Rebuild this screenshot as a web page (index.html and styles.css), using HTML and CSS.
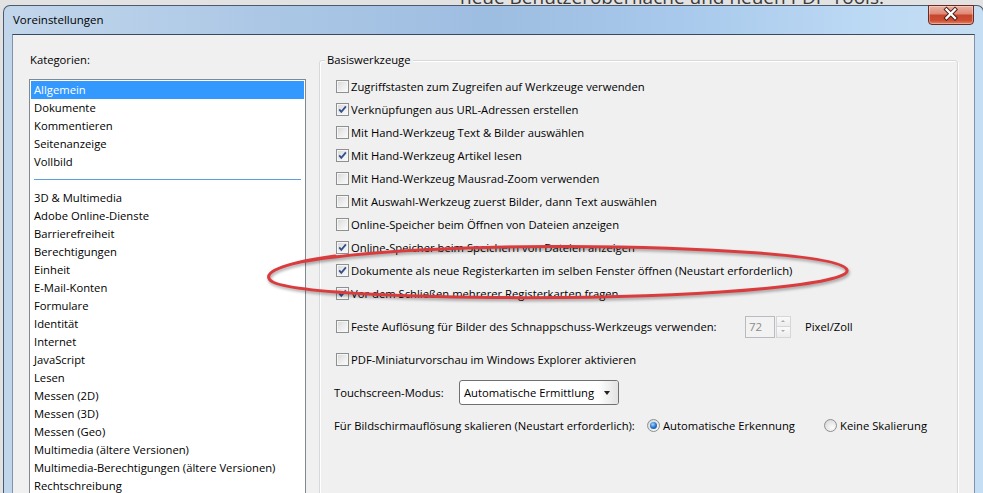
FILE: index.html
```html
<!DOCTYPE html>
<html lang="de">
<head>
    <meta charset="UTF-8" />
    <title>Voreinstellungen</title>
    <link rel="stylesheet" href="styles.css">
</head>
<body>

<!-- page behind the dialog, only its last line peeks out -->
<div class="backdrop"><span>neue Benutzeroberfläche und neuen PDF-Tools.</span></div>

<div class="window">
    <div class="titlebar">
        <span class="title">Voreinstellungen</span>
        <button class="close" aria-label="Schließen">
            <svg width="46" height="19" viewBox="0 0 46 19">
                <path d="M18.5 4.5l8.5 8.5M27 4.5l-8.5 8.5" stroke="#4b1a12" stroke-width="4.2" stroke-linecap="square" fill="none"/>
                <path d="M18.5 4.5l8.5 8.5M27 4.5l-8.5 8.5" stroke="#fff" stroke-width="2.3" stroke-linecap="square" fill="none"/>
            </svg>
        </button>
    </div>

    <div class="client">
        <div class="categories">
            <div class="cat-label">Kategorien:</div>
            <ul class="listbox">
                <li class="selected">Allgemein</li>
                <li>Dokumente</li>
                <li>Kommentieren</li>
                <li>Seitenanzeige</li>
                <li>Vollbild</li>
                <li class="sep"></li>
                <li>3D &amp; Multimedia</li>
                <li>Adobe Online-Dienste</li>
                <li>Barrierefreiheit</li>
                <li>Berechtigungen</li>
                <li>Einheit</li>
                <li>E-Mail-Konten</li>
                <li>Formulare</li>
                <li>Identität</li>
                <li>Internet</li>
                <li>JavaScript</li>
                <li>Lesen</li>
                <li>Messen (2D)</li>
                <li>Messen (3D)</li>
                <li>Messen (Geo)</li>
                <li>Multimedia (ältere Versionen)</li>
                <li>Multimedia-Berechtigungen (ältere Versionen)</li>
                <li>Rechtschreibung</li>
            </ul>
        </div>

        <fieldset class="group">
            <legend>Basiswerkzeuge</legend>

            <div class="opt"><span class="box"></span>Zugriffstasten zum Zugreifen auf Werkzeuge verwenden</div>
            <div class="opt"><span class="box checked"></span>Verknüpfungen aus URL-Adressen erstellen</div>
            <div class="opt"><span class="box"></span>Mit Hand-Werkzeug Text &amp; Bilder auswählen</div>
            <div class="opt"><span class="box checked"></span>Mit Hand-Werkzeug Artikel lesen</div>
            <div class="opt"><span class="box"></span>Mit Hand-Werkzeug Mausrad-Zoom verwenden</div>
            <div class="opt"><span class="box"></span>Mit Auswahl-Werkzeug zuerst Bilder, dann Text auswählen</div>
            <div class="opt"><span class="box"></span>Online-Speicher beim Öffnen von Dateien anzeigen</div>
            <div class="opt"><span class="box checked"></span>Online-Speicher beim Speichern von Dateien anzeigen</div>
            <div class="opt"><span class="box checked"></span>Dokumente als neue Registerkarten im selben Fenster öffnen (Neustart erforderlich)</div>
            <div class="opt"><span class="box checked"></span>Vor dem Schließen mehrerer Registerkarten fragen</div>

            <div class="opt spaced">
                <span class="box"></span>
                <span class="snap-text">Feste Auflösung für Bilder des Schnappschuss-Werkzeugs verwenden:</span>
                <span class="spin">
                    <span class="spin-value">72</span>
                    <span class="spin-btns">
                        <span class="spin-up"></span>
                        <span class="spin-down"></span>
                    </span>
                </span>
                <span class="unit">Pixel/Zoll</span>
            </div>

            <div class="opt spaced"><span class="box"></span>PDF-Miniaturvorschau im Windows Explorer aktivieren</div>

            <div class="opt spaced field">
                <span class="touch-label">Touchscreen-Modus:</span>
                <span class="select">
                    <span>Automatische Ermittlung</span>
                    <span class="select-arrow"></span>
                </span>
            </div>

            <div class="opt spaced field">
                <span class="scale-label">Für Bildschirmauflösung skalieren (Neustart erforderlich):</span>
                <span class="radio-opt first"><span class="radio on"></span>Automatische Erkennung</span>
                <span class="radio-opt"><span class="radio"></span>Keine Skalierung</span>
            </div>
        </fieldset>
    </div>
</div>

<!-- red marker ring drawn over the dialog -->
<svg class="marker" width="983" height="493" viewBox="0 0 983 493">
    <path d="M300 262C360 251 470 246 565 246.5C700 247 842 255 847 270C851 284 720 296 560 297.5C420 298.5 282 293 270 280C262 271 290 262 335 256"
          fill="none" stroke="#da3b3d" stroke-width="3" stroke-linecap="round"/>
</svg>

</body>
</html>
```

FILE: styles.css
```css
* {
    box-sizing: border-box;
}
html, body {
    margin: 0;
}
body {
    position: relative;
    width: 983px;
    height: 493px;
    overflow: hidden;
    background: #e2e2e2;
    font: 11.25px "Segoe UI", "Open Sans", sans-serif;
    color: #000;
}

.backdrop {
    height: 5px;
    overflow: hidden;
    padding-left: 460px;
}
.backdrop span {
    display: block;
    font-size: 19px;
    line-height: 20px;
    margin-top: -13px;
    color: #3a3a3a;
}

/* glass frame */
.window {
    width: 981px;
    margin-left: 3px;
    padding: 0 8px;
    border: 1px solid #4d5a6b;
    border-bottom: 0;
    border-radius: 7px 7px 0 0;
    background: linear-gradient(90deg, #c2d6eb 0%, #adc8e6 25%, #9dbde1 50%, #a9caec 70%, #bcd9f4 88%, #c6def3 100%);
}
.titlebar {
    display: flex;
    align-items: flex-start;
    height: 28px;
}
.title {
    padding: 6px 0 0 1px;
    line-height: 16px;
    font-size: 11.5px;
}
.close {
    margin: -1px 1px 0 auto;
    width: 46px;
    height: 20px;
    padding: 0;
    border: 1px solid #6b2a21;
    border-radius: 0 0 4px 4px;
    background: linear-gradient(#eab2a4 0%, #df8b78 42%, #c9462e 52%, #cd4d33 80%, #e08468 100%);
    box-shadow: inset 0 0 0 1px rgba(255, 255, 255, 0.35);
}
.close svg {
    display: block;
    margin: -1px 0 0 -1px;
}

.client {
    display: flex;
    align-items: flex-start;
    gap: 13px;
    height: 470px;
    padding: 17px 16px 0;
    background: #f0f0f0;
    border: 1px solid #8293a8;
    border-top-color: #3a4a5e;
}

/* category list */
.categories {
    flex: 0 0 277px;
}
.cat-label {
    line-height: 16px;
    padding-left: 1px;
    margin-bottom: 11px;
}
.listbox {
    list-style: none;
    margin: 0;
    padding: 1px;
    height: 440px;
    background: #fff;
    border: 1px solid #828790;
}
.listbox li {
    height: 18px;
    line-height: 18px;
    padding-left: 3px;
    white-space: nowrap;
}
.listbox li.selected {
    background: #3399ff;
    color: #fff;
}
.listbox li.sep {
    padding: 8px 3px 0;
}
.listbox li.sep::before {
    content: "";
    display: block;
    height: 1px;
    background: #5c9fdf;
}

/* option group */
.group {
    flex: 0 0 639px;
    min-width: 0;
    min-height: 480px;
    margin: 0;
    padding: 7px 16px 0;
    border: 1px solid #d5d9dc;
    border-radius: 3px;
    box-shadow: inset 1px 1px 0 #fff, 1px 1px 0 #fff;
}
.group legend {
    margin-left: -11px;
    padding: 0 2px;
    line-height: 16px;
    background: #f0f0f0;
}

.opt {
    display: flex;
    align-items: center;
    height: 23px;
    white-space: nowrap;
}
.opt.spaced {
    margin-top: 10px;
}
.opt.field {
    margin-left: -2px;
}

.box {
    position: relative;
    flex: none;
    width: 13px;
    height: 13px;
    margin-right: 2px;
    border: 1px solid #8e8f8f;
    background: linear-gradient(135deg, #d6d6d6 0%, #ececec 50%, #fbfbfb 100%);
    box-shadow: inset 0 0 0 1px #f6f6f6;
}
.box.checked::after {
    content: "";
    position: absolute;
    left: 1px;
    top: 1px;
    width: 9px;
    height: 9px;
    background: url("data:image/svg+xml,%3Csvg xmlns='http://www.w3.org/2000/svg' viewBox='0 0 9 9'%3E%3Cpath d='M1.2 4.4l2.1 2.4L7.9 1.3' fill='none' stroke='%23334f8c' stroke-width='1.8'/%3E%3C/svg%3E") no-repeat;
}

.snap-text {
    flex: 0 0 394px;
}
.spin {
    display: flex;
    height: 22px;
}
.spin-value {
    width: 30px;
    padding: 2px 0 0 3px;
    color: #8b8b8b;
    font-size: 11.5px;
    border: 1px solid #b8bcc0;
    background: #f2f2f2;
}
.spin-btns {
    display: flex;
    flex-direction: column;
    width: 15px;
    margin-left: 1px;
}
.spin-up, .spin-down {
    position: relative;
    flex: 1;
    border: 1px solid #d6d6d6;
    background: linear-gradient(#fafafa, #ececec);
}
.spin-down {
    border-top: 0;
}
.spin-up::after, .spin-down::after {
    content: "";
    position: absolute;
    left: 4px;
    top: 3px;
    border: 2.5px solid transparent;
}
.spin-up::after {
    border-bottom-color: #a9a9a9;
    top: 1px;
}
.spin-down::after {
    border-top-color: #a9a9a9;
}
.unit {
    margin-left: 14px;
}

.touch-label {
    flex: 0 0 125px;
}
.select {
    display: flex;
    align-items: center;
    width: 160px;
    height: 25px;
    padding-left: 4px;
    border: 1px solid #707070;
    border-radius: 3px;
    background: #fff;
}
.select-arrow {
    position: relative;
    margin-left: auto;
    width: 20px;
    height: 100%;
    background: linear-gradient(90deg, #fff 0%, #e2e2e2 100%);
    border-radius: 0 2px 2px 0;
}
.select-arrow::after {
    content: "";
    position: absolute;
    left: 6px;
    top: 10px;
    border: 3.5px solid transparent;
    border-top: 4px solid #222;
}

.scale-label {
    flex: 0 0 313px;
}
.radio-opt {
    display: flex;
    align-items: center;
    flex: none;
}
.radio-opt.first {
    flex-basis: 177px;
}
.radio {
    position: relative;
    flex: none;
    width: 13px;
    height: 13px;
    margin-right: 3px;
    border: 1px solid #8e8f8f;
    border-radius: 50%;
    background: radial-gradient(circle at 65% 70%, #fdfdfd 0%, #e6e6e6 55%, #cfcfcf 100%);
}
.radio.on::after {
    content: "";
    position: absolute;
    left: 2px;
    top: 2px;
    width: 7px;
    height: 7px;
    border-radius: 50%;
    background: radial-gradient(circle at 40% 35%, #a6d6ff 0%, #2b77cc 50%, #0f3f80 100%);
}

.marker {
    position: absolute;
    left: 0;
    top: 0;
    pointer-events: none;
    filter: drop-shadow(1px 2px 1.5px rgba(0, 0, 0, 0.35));
}
```
